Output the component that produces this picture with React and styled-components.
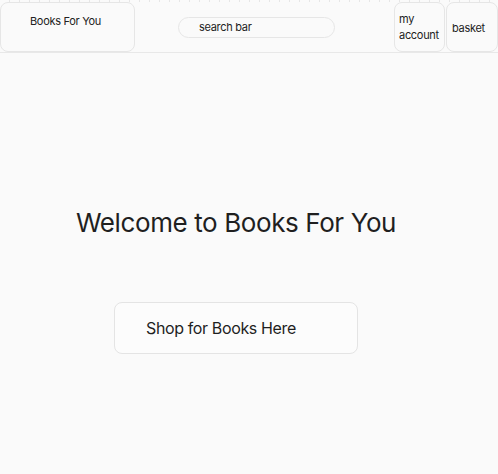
import React from "react";
import styled, { createGlobalStyle } from "styled-components";

const GlobalStyle = createGlobalStyle`
  html, body {
    margin: 0;
    padding: 0;
    background: #fafafa;
  }
  body {
    font-family: Inter, "Noto Sans", sans-serif;
    color: #222;
  }
`;

const Page = styled.div`
  width: 498px;
  height: 474px;
  overflow: hidden;
  background: #fafafa;
`;

const Ticks = styled.div`
  height: 2px;
  background: repeating-linear-gradient(
    to right,
    #fafafa 0,
    #fafafa 9px,
    #e6e6e6 9px,
    #e6e6e6 10px
  );
`;

const Header = styled.header`
  display: flex;
  align-items: stretch;
  height: 51px;
  box-sizing: border-box;
  border-bottom: 1px solid #e8e8e8;
`;

const Tile = styled.div`
  box-sizing: border-box;
  width: ${(p) => p.$width}px;
  margin-left: ${(p) => p.$gap || 0}px;
  border: 1px solid #e6e6e6;
  border-radius: 8px;
  background: #fafafa;
  font-size: 11px;
  letter-spacing: -0.3px;
  line-height: 16px;
  display: flex;
  align-items: ${(p) => (p.$top ? "flex-start" : "center")};
  justify-content: ${(p) => (p.$center ? "center" : "flex-start")};
  padding: ${(p) => p.$pad};
`;

const Middle = styled.div`
  flex: 1;
  display: flex;
  align-items: flex-start;
  padding: 15px 0 0 43px;
`;

const Search = styled.div`
  box-sizing: border-box;
  width: 157px;
  height: 21px;
  border: 1px solid #e6e6e6;
  border-radius: 11px;
  font-size: 11px;
  letter-spacing: -0.3px;
  line-height: 19px;
  padding-left: 20px;
  background: #fafafa;
`;

const Main = styled.main`
  width: 472px;
  display: flex;
  flex-direction: column;
  align-items: center;
  padding-top: 152px;
`;

const Title = styled.h1`
  margin: 0;
  font-size: 26px;
  font-weight: 400;
  letter-spacing: -0.4px;
  line-height: 36px;
  color: #1f1f1f;
`;

const ShopButton = styled.button`
  margin-top: 61px;
  width: 244px;
  height: 52px;
  box-sizing: border-box;
  border: 1px solid #e4e4e4;
  border-radius: 8px;
  background: #fcfcfc;
  font-family: Inter, "Noto Sans", sans-serif;
  font-size: 16px;
  letter-spacing: -0.37px;
  color: #1f1f1f;
  text-align: left;
  padding-left: 31px;
`;

export default function App() {
  return (
    <Page>
      <GlobalStyle />
      <Ticks />
      <Header>
        <Tile $width={135} $top $center $pad="10px 4px 0 0">
          Books For You
        </Tile>
        <Middle>
          <Search>search bar</Search>
        </Middle>
        <Tile $width={51} $top $pad="8px 4px 0 4px">
          my account
        </Tile>
        <Tile $width={52} $gap={1} $pad="2px 0 0 5px">
          basket
        </Tile>
      </Header>
      <Main>
        <Title>Welcome to Books For You</Title>
        <ShopButton>Shop for Books Here</ShopButton>
      </Main>
    </Page>
  );
}
